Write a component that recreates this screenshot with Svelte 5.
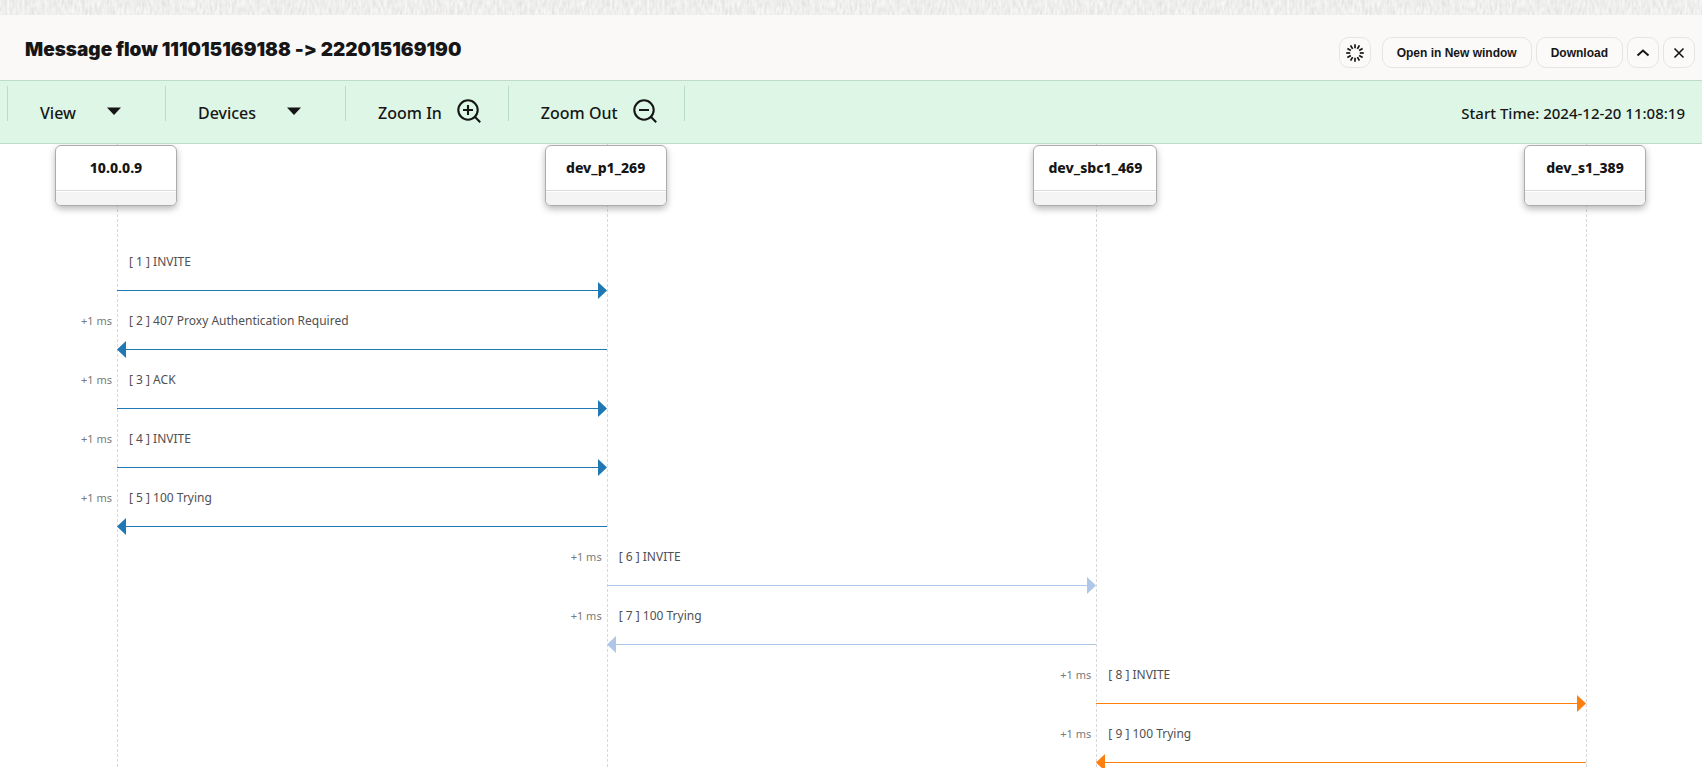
<script>
  const devices = ['10.0.0.9', 'dev_p1_269', 'dev_sbc1_469', 'dev_s1_389'];

  const blue = '#1f77b4';
  const pale = '#aec7e8';
  const orange = '#ff7f0e';

  const messages = [
    { text: 'INVITE', lane: 0, back: false, color: blue, delta: '' },
    { text: '407 Proxy Authentication Required', lane: 0, back: true, color: blue, delta: '+1 ms' },
    { text: 'ACK', lane: 0, back: false, color: blue, delta: '+1 ms' },
    { text: 'INVITE', lane: 0, back: false, color: blue, delta: '+1 ms' },
    { text: '100 Trying', lane: 0, back: true, color: blue, delta: '+1 ms' },
    { text: 'INVITE', lane: 1, back: false, color: pale, delta: '+1 ms' },
    { text: '100 Trying', lane: 1, back: true, color: pale, delta: '+1 ms' },
    { text: 'INVITE', lane: 2, back: false, color: orange, delta: '+1 ms' },
    { text: '100 Trying', lane: 2, back: true, color: orange, delta: '+1 ms' }
  ];

  const spokes = Array.from({ length: 12 }, (_, i) => i * 30);
</script>

<div class="window">
  <svg class="texture" aria-hidden="true">
    <filter id="paper" x="0" y="0" width="100%" height="100%">
      <feTurbulence type="fractalNoise" baseFrequency="0.4 0.13" numOctaves="2" seed="4" />
      <feColorMatrix values="0.3 0 0 0 0.71  0.3 0 0 0 0.707  0.3 0 0 0 0.7  0 0 0 0 1" />
    </filter>
    <rect width="100%" height="100%" filter="url(#paper)" />
  </svg>

  <header class="titlebar">
    <h1>Message flow 111015169188 -&gt; 222015169190</h1>
    <div class="actions">
      <button class="square spinner" aria-label="Refresh">
        <svg width="18" height="18" viewBox="-9 -9 18 18" stroke="#161616" stroke-width="1.7">
          {#each spokes as angle}
            <path d="M0-4.8V-8.8" transform="rotate({angle})" />
          {/each}
        </svg>
      </button>
      <button>Open in New window</button>
      <button>Download</button>
      <button class="square" aria-label="Collapse">
        <svg width="14" height="14" viewBox="0 0 14 14" fill="none" stroke="#161616" stroke-width="2">
          <path d="M1.5 9.5 7 4.5l5.5 5" />
        </svg>
      </button>
      <button class="square" aria-label="Close">
        <svg width="14" height="14" viewBox="0 0 14 14" fill="none" stroke="#161616" stroke-width="1.6">
          <path d="m2.5 2.5 9 9m0-9-9 9" />
        </svg>
      </button>
    </div>
  </header>

  <nav class="toolbar">
    <button class="item menu">
      <span>View</span>
      <svg width="14" height="24" viewBox="0 0 14 24"><path d="M0 8.500h14L7 16z" fill="#161616" /></svg>
    </button>
    <button class="item menu">
      <span>Devices</span>
      <svg width="14" height="24" viewBox="0 0 14 24"><path d="M0 8.500h14L7 16z" fill="#161616" /></svg>
    </button>
    <button class="item">
      <span>Zoom In</span>
      <svg width="24" height="24" viewBox="0 0 24 24" fill="none" stroke="#161616" stroke-width="2.1">
        <circle cx="11" cy="11" r="9.7" />
        <path d="m17.800 17.800 5.400 5.400M11 6v10M6 11h10" />
      </svg>
    </button>
    <button class="item">
      <span>Zoom Out</span>
      <svg width="24" height="24" viewBox="0 0 24 24" fill="none" stroke="#161616" stroke-width="2.1">
        <circle cx="11" cy="11" r="9.7" />
        <path d="m17.800 17.800 5.400 5.400M6 11h10" />
      </svg>
    </button>
    <div class="end"></div>
    <p class="start">Start Time: 2024-12-20 11:08:19</p>
  </nav>

  <main class="diagram">
    {#each devices as device, i}
      <div class="lifeline" style="grid-column: {i + 2}"></div>
    {/each}
    {#each devices as device, i}
      <div class="device" style="grid-column: {i + 2}">
        <div class="card">
          <strong>{device}</strong>
          <div class="foot"></div>
        </div>
      </div>
    {/each}
    {#each messages as m, i}
      <span class="delta" style="grid-column: {m.lane + 1}; grid-row: {i + 2}">{m.delta}</span>
      <div class="message" style="grid-column: {m.lane + 2}; grid-row: {i + 2}">
        <span class="label">[ {i + 1} ] {m.text}</span>
        <div class="arrow" class:back={m.back} style="color: {m.color}">
          <div class="shaft"></div>
          <svg width="9" height="17" viewBox="0 0 9 17"><path d="M0 0v17l9-8.500z" fill="currentColor" /></svg>
        </div>
      </div>
    {/each}
  </main>
</div>

<style>
  :global(body) {
    margin: 0;
    background: #fff;
  }
  .window {
    display: flex;
    flex-direction: column;
    height: 100vh;
    overflow: hidden;
    margin-right: 2px;
    color: #161616;
    font-family: 'Noto Sans', 'Open Sans', sans-serif;
  }
  button {
    margin: 0;
    color: inherit;
    cursor: pointer;
  }
  .texture {
    display: block;
    flex: none;
    width: 100%;
    height: 15px;
  }
  .titlebar {
    display: flex;
    flex: none;
    align-items: center;
    justify-content: space-between;
    height: 65px;
    padding: 0 7px 0 25px;
    background: #faf9f8;
  }
  h1 {
    margin: 0;
    padding-top: 4px;
    font: 900 19px/24px Inter, 'Liberation Sans', sans-serif;
    font-variant-ligatures: no-contextual;
  }
  .actions {
    display: flex;
    gap: 4px;
    padding-top: 10px;
    align-items: center;
  }
  .actions button {
    display: flex;
    align-items: center;
    justify-content: center;
    height: 31px;
    padding: 0 14px;
    border: 1px solid #e7e5e4;
    border-radius: 10px;
    background: #fbfaf9;
    font: bold 12px/16px 'Liberation Sans', sans-serif;
  }
  .actions .square {
    width: 32px;
    padding: 0;
  }
  .actions .spinner {
    margin-right: 7px;
  }
  .toolbar {
    display: flex;
    flex: none;
    height: 62px;
    padding: 0 17px 0 7px;
    border: solid #bddcc8;
    border-width: 1px 0;
    background: #def6e6;
    font-size: 15px;
    line-height: 24px;
  }
  .item {
    display: flex;
    align-items: flex-start;
    gap: 15px;
    padding: 18px 27px 0 33px;
    border: 0;
    background: linear-gradient(#bddcc8, #bddcc8) 0 5px / 1px 35px no-repeat;
    font: inherit;
    font-size: 16px;
  }
  .item.menu {
    gap: 31px;
    padding-right: 44px;
  }
  .item span {
    padding-top: 2px;
    font-weight: 500;
  }
  .end {
    flex: 1;
    background: linear-gradient(#bddcc8, #bddcc8) 0 5px / 1px 35px no-repeat;
  }
  .start {
    margin: 0;
    padding-top: 20px;
    font-weight: 500;
  }
  .diagram {
    display: grid;
    flex: 1;
    min-height: 0;
    overflow: hidden;
    grid-template-columns: 117px repeat(3, 1fr) 116px;
    grid-template-rows: 96px repeat(9, 59px);
  }
  .lifeline {
    grid-row: 1 / -1;
    width: 1px;
    background: repeating-linear-gradient(#d9d9d9 0 3px, transparent 3px 5px);
  }
  .device {
    display: flex;
    grid-row: 1;
    align-items: flex-start;
    justify-content: center;
    width: 0;
    margin-left: -1px;
    padding-top: 1px;
  }
  .card {
    flex: none;
    min-width: 120px;
    border: 1px solid #acacac;
    border-radius: 6px;
    background: #fff;
    box-shadow: 0 3px 7px rgb(0 0 0 / 28%);
    overflow: hidden;
    text-align: center;
  }
  .card strong {
    display: block;
    padding: 12px 14px;
    border-bottom: 1px solid #d9d9d9;
    font-size: 14px;
    font-weight: 800;
    line-height: 20px;
  }
  .foot {
    height: 13px;
    margin-top: 1px;
    background: #f4f4f4;
  }
  .delta {
    justify-self: end;
    padding: 13px 5px 0 0;
    color: #7a7a7a;
    font-size: 11px;
    line-height: 18px;
  }
  .message {
    display: flex;
    flex-direction: column;
  }
  .label {
    padding: 13px 0 0 12px;
    color: #505050;
    font-size: 12px;
    line-height: 18px;
    white-space: nowrap;
  }
  .arrow {
    display: flex;
    align-items: center;
    height: 17px;
    margin-top: 11px;
  }
  .shaft {
    flex: 1;
    height: 1px;
    background: currentColor;
  }
  .back {
    flex-direction: row-reverse;
  }
  .back svg {
    transform: scaleX(-1);
  }
</style>
